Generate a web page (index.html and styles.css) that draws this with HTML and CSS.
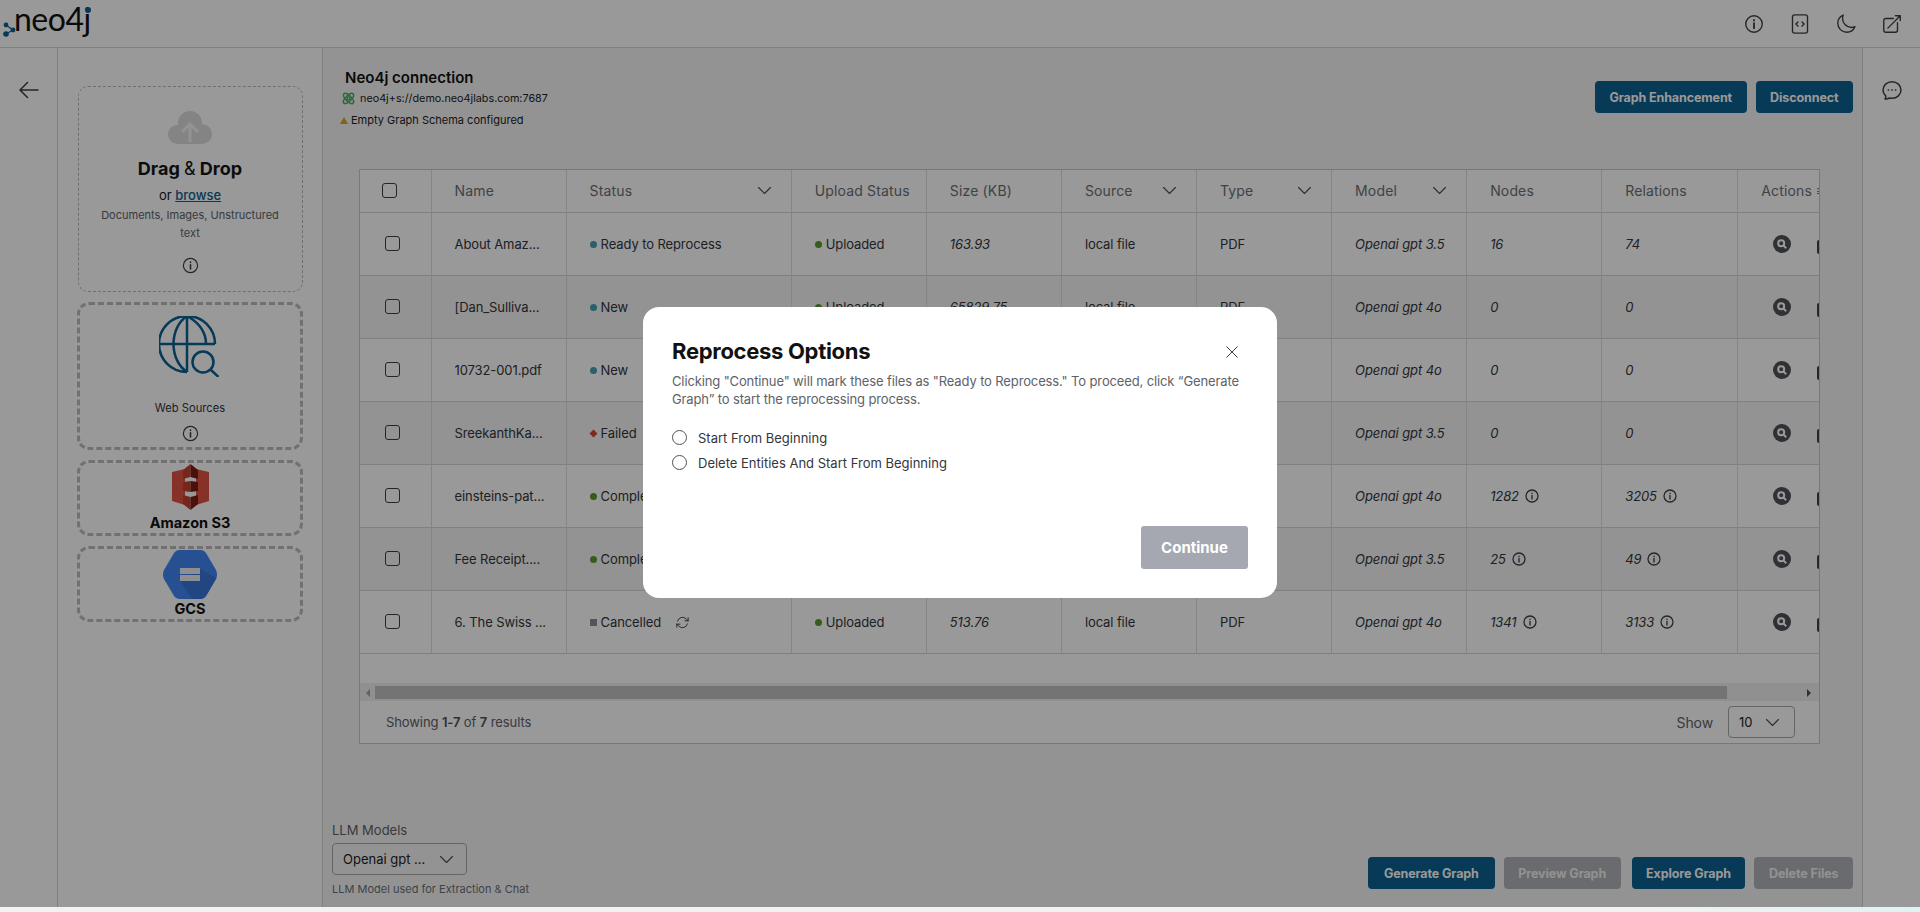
FILE: index.html
```html
<!DOCTYPE html>
<html lang="en">
<head>
  <meta charset="UTF-8">
  <title>Neo4j LLM Graph Builder</title>
  <link rel="stylesheet" href="styles.css">
</head>
<body>
  <svg class="sprites" aria-hidden="true">
    <symbol id="i-info" viewBox="0 0 24 24"><path d="M21 12a9 9 0 1 1-18 0 9 9 0 0 1 18 0Z"/><path d="M12 11v5.500M12 7.600v.6" stroke-width="2"/></symbol>
    <symbol id="i-code" viewBox="0 0 24 24"><path d="M14.250 9.750 16.500 12l-2.250 2.250m-4.500 0L7.500 12l2.250-2.250M6 22h12a2.200 2.200 0 0 0 2.200-2.200V4.200A2.200 2.200 0 0 0 18 2H6a2.200 2.200 0 0 0-2.200 2.200v15.600A2.200 2.200 0 0 0 6 22Z"/></symbol>
    <symbol id="i-moon" viewBox="0 0 24 24"><path d="M21.752 15.002A9.720 9.720 0 0 1 18 15.750c-5.385 0-9.750-4.365-9.750-9.750 0-1.330.266-2.597.748-3.752A9.753 9.753 0 0 0 3 11.250C3 16.635 7.365 21 12.750 21a9.753 9.753 0 0 0 9.002-5.998Z"/></symbol>
    <symbol id="i-ext" viewBox="0 0 24 24"><path d="M13.500 6H5.250A2.250 2.250 0 0 0 3 8.250v10.500A2.250 2.250 0 0 0 5.250 21h10.500A2.250 2.250 0 0 0 18 18.750V10.500m-10.500 6L21 3m0 0h-5.250M21 3v5.250"/></symbol>
    <symbol id="i-chat" viewBox="0 0 24 24"><path d="M8.600 12h-.4m4 0h-.4m4 0h-.4M21 12c0 4.556-4.030 8.250-9 8.250a9.764 9.764 0 0 1-2.555-.337A5.972 5.972 0 0 1 5.410 20.970a5.969 5.969 0 0 1-.474-.065 4.480 4.480 0 0 0 .978-2.025c.09-.457-.133-.901-.467-1.226C3.930 16.178 3 14.189 3 12c0-4.556 4.030-8.250 9-8.250s9 3.694 9 8.250Z"/></symbol>
    <symbol id="i-back" viewBox="0 0 24 24"><path d="M10.500 19.500 3 12m0 0 7.500-7.500M3 12h18"/></symbol>
    <symbol id="i-chev" viewBox="0 0 24 24"><path d="m19.500 8.250-7.500 7.500-7.500-7.500"/></symbol>
    <symbol id="i-close" viewBox="0 0 24 24"><path d="M4 20 20 4M4 4l16 16"/></symbol>
    <symbol id="i-refresh" viewBox="0 0 24 24"><path d="M16.023 9.348h4.992v-.001M2.985 19.644v-4.992m0 0h4.992m-4.993 0 3.181 3.183a8.250 8.250 0 0 0 13.803-3.700M4.031 9.865a8.250 8.250 0 0 1 13.803-3.700l3.181 3.182m0-4.991v4.990"/></symbol>
    <symbol id="i-search" viewBox="0 0 18 18"><circle class="sq-bg" cx="9" cy="9" r="9"/><circle class="sq-lens" cx="8.200" cy="8.200" r="3"/><path class="sq-lens" d="m10.400 10.400 2.800 2.800"/></symbol>
  </svg>

  <div class="app">
    <header class="topbar">
      <div class="logo">
        <svg class="logo-dots" width="14" height="16" viewBox="0 0 14 16">
          <path d="M3 3 10 8 3 12" fill="none" stroke="#0a6190" stroke-width="1.200"/>
          <circle cx="3" cy="3" r="2.400"/><circle cx="3" cy="12" r="2.800"/><circle cx="10" cy="8" r="2.400"/>
        </svg>
        <span class="logo-text">neo4j</span>
        <i class="logo-jdot"></i>
      </div>
      <nav class="topbar-icons">
        <svg class="icon"><use href="#i-info"/></svg>
        <svg class="icon"><use href="#i-code"/></svg>
        <svg class="icon"><use href="#i-moon"/></svg>
        <svg class="icon"><use href="#i-ext"/></svg>
      </nav>
    </header>

    <div class="content">
      <aside class="rail">
        <svg class="icon rail-icon"><use href="#i-back"/></svg>
      </aside>

      <section class="sources">
        <div class="drop-zone">
          <svg class="cloud" width="44" height="33" viewBox="0 0 44 33">
            <circle cx="22" cy="12" r="12" fill="#dcdcdc"/>
            <circle cx="9.500" cy="23.500" r="9.500" fill="#dcdcdc"/>
            <circle cx="34" cy="23" r="10" fill="#dcdcdc"/>
            <path d="M9 16H34V33H9Z" fill="#dcdcdc"/>
            <path d="M22 31V13m-8 8 8-8 8 8" fill="none" stroke="#f6f6f6" stroke-width="3"/>
          </svg>
          <div class="drop-title">Drag <span>&amp;</span> Drop</div>
          <div class="drop-or">or <a href="#">browse</a></div>
          <div class="drop-hint">Documents, Images, Unstructured text</div>
          <svg class="icon info-sm"><use href="#i-info"/></svg>
        </div>

        <div class="source-box source-web">
          <svg class="globe" width="60" height="61" viewBox="0 0 60 61">
            <path d="M56 28A28 28 0 1 0 28 56M28 0V56M0 28H56M28 0C10 12 10 44 28 56M28 0C44 9 47 20 47 28"/>
            <circle cx="44" cy="46" r="10.500"/>
            <path d="m51.500 53.500 8 7.500"/>
          </svg>
          <div class="web-label">Web Sources</div>
          <svg class="icon info-sm"><use href="#i-info"/></svg>
        </div>

        <div class="source-box source-logo">
          <svg width="37" height="46" viewBox="0 0 37 46">
            <path d="M0 8 13 5V41L0 37Z" fill="#e25444"/>
            <path d="M37 8 24 5V41L37 37Z" fill="#e25444"/>
            <path d="M11 6 18.500 0V13L11 15Z M11 18 18.500 17V28L11 27Z M11 31 18.500 33V46L11 40Z" fill="#c8402f"/>
            <path d="M18.500 0 26 6V15L18.500 13Z M18.500 17 26 18V27L18.500 28Z M18.500 33 26 31V40L18.500 46Z" fill="#7b1d13"/>
          </svg>
          <div class="source-name">Amazon S3</div>
        </div>

        <div class="source-box source-logo source-gcs">
          <svg width="56" height="49" viewBox="0 0 56 49">
            <path d="M2 20 12 3Q14 0 17 0H39Q42 0 44 3L54 20Q56 24.500 54 29L44 46Q42 49 39 49H17Q14 49 12 46L2 29Q0 24.500 2 20Z" fill="#4285f4"/>
            <path d="M38 19 54.500 28 44 46Q42 49 39 49H30L18 31Z" fill="#3a76d8"/>
            <path d="M18 18H38V24H18Z M18 25H38V31H18Z" fill="#eceff4"/>
          </svg>
          <div class="source-name">GCS</div>
        </div>
      </section>

      <main class="main">
        <div class="conn-row">
          <div class="conn">
            <h2 class="conn-title">Neo4j connection</h2>
            <div class="conn-line">
              <svg class="atom" width="13" height="13" viewBox="0 0 13 13">
                <ellipse cx="6.500" cy="6.500" rx="6.500" ry="2.800" transform="rotate(45 6.500 6.500)"/>
                <ellipse cx="6.500" cy="6.500" rx="6.500" ry="2.800" transform="rotate(-45 6.500 6.500)"/>
                <circle cx="6.500" cy="6.500" r="1.500"/>
              </svg>
              neo4j+s://demo.neo4jlabs.com:7687
            </div>
            <div class="conn-line conn-warn"><i class="warn-tri"></i>Empty Graph Schema configured</div>
          </div>
          <div class="conn-actions">
            <button class="btn">Graph Enhancement</button>
            <button class="btn">Disconnect</button>
          </div>
        </div>

        <div class="table-card">
          <div class="table-scroll">
            <table class="files">
              <colgroup>
                <col class="c-check"><col class="c-std"><col class="c-status"><col class="c-std"><col class="c-std"><col class="c-std">
                <col class="c-std"><col class="c-std"><col class="c-std"><col class="c-rel"><col class="c-act">
              </colgroup>
              <thead>
                <tr>
                  <th><input class="check check-head" type="checkbox"></th>
                  <th>Name</th>
                  <th><div class="th-flex">Status<svg class="icon chev"><use href="#i-chev"/></svg></div></th>
                  <th>Upload Status</th>
                  <th>Size (KB)</th>
                  <th><div class="th-flex">Source<svg class="icon chev"><use href="#i-chev"/></svg></div></th>
                  <th><div class="th-flex">Type<svg class="icon chev"><use href="#i-chev"/></svg></div></th>
                  <th><div class="th-flex">Model<svg class="icon chev"><use href="#i-chev"/></svg></div></th>
                  <th>Nodes</th>
                  <th>Relations</th>
                  <th>Actions <span class="menu-glyph">≡</span></th>
                </tr>
              </thead>
              <tbody>
                <tr>
                  <td><input class="check" type="checkbox"></td>
                  <td>About Amaz...</td>
                  <td><i class="dot teal"></i>Ready to Reprocess</td>
                  <td><i class="dot green"></i>Uploaded</td>
                  <td class="it">163.93</td><td>local file</td><td>PDF</td>
                  <td class="it">Openai gpt 3.5</td><td class="it">16</td><td class="it">74</td>
                  <td><div class="acts"><svg class="search"><use href="#i-search"/></svg><i class="act-clip"></i></div></td>
                </tr>
                <tr>
                  <td><input class="check" type="checkbox"></td>
                  <td>[Dan_Sulliva...</td>
                  <td><i class="dot teal"></i>New</td>
                  <td><i class="dot green"></i>Uploaded</td>
                  <td class="it">65829.75</td><td>local file</td><td>PDF</td>
                  <td class="it">Openai gpt 4o</td><td class="it">0</td><td class="it">0</td>
                  <td><div class="acts"><svg class="search off"><use href="#i-search"/></svg><i class="act-clip"></i></div></td>
                </tr>
                <tr>
                  <td><input class="check" type="checkbox"></td>
                  <td>10732-001.pdf</td>
                  <td><i class="dot teal"></i>New</td>
                  <td></td><td></td><td></td><td></td>
                  <td class="it">Openai gpt 4o</td><td class="it">0</td><td class="it">0</td>
                  <td><div class="acts"><svg class="search off"><use href="#i-search"/></svg><i class="act-clip"></i></div></td>
                </tr>
                <tr>
                  <td><input class="check" type="checkbox"></td>
                  <td>SreekanthKa...</td>
                  <td><i class="dot red"></i>Failed</td>
                  <td></td><td></td><td></td><td></td>
                  <td class="it">Openai gpt 3.5</td><td class="it">0</td><td class="it">0</td>
                  <td><div class="acts"><svg class="search"><use href="#i-search"/></svg><i class="act-clip"></i></div></td>
                </tr>
                <tr>
                  <td><input class="check" type="checkbox"></td>
                  <td>einsteins-pat...</td>
                  <td><i class="dot green"></i>Completed</td>
                  <td></td><td></td><td></td><td></td>
                  <td class="it">Openai gpt 4o</td>
                  <td class="it">1282<svg class="icon info-xs"><use href="#i-info"/></svg></td>
                  <td class="it">3205<svg class="icon info-xs"><use href="#i-info"/></svg></td>
                  <td><div class="acts"><svg class="search"><use href="#i-search"/></svg><i class="act-clip"></i></div></td>
                </tr>
                <tr>
                  <td><input class="check" type="checkbox"></td>
                  <td>Fee Receipt....</td>
                  <td><i class="dot green"></i>Completed</td>
                  <td></td><td></td><td></td><td></td>
                  <td class="it">Openai gpt 3.5</td>
                  <td class="it">25<svg class="icon info-xs"><use href="#i-info"/></svg></td>
                  <td class="it">49<svg class="icon info-xs"><use href="#i-info"/></svg></td>
                  <td><div class="acts"><svg class="search"><use href="#i-search"/></svg><i class="act-clip"></i></div></td>
                </tr>
                <tr>
                  <td><input class="check" type="checkbox"></td>
                  <td>6. The Swiss ...</td>
                  <td><i class="dot gray"></i>Cancelled<svg class="icon refresh"><use href="#i-refresh"/></svg></td>
                  <td><i class="dot green"></i>Uploaded</td>
                  <td class="it">513.76</td><td>local file</td><td>PDF</td>
                  <td class="it">Openai gpt 4o</td>
                  <td class="it">1341<svg class="icon info-xs"><use href="#i-info"/></svg></td>
                  <td class="it">3133<svg class="icon info-xs"><use href="#i-info"/></svg></td>
                  <td><div class="acts"><svg class="search"><use href="#i-search"/></svg><i class="act-clip"></i></div></td>
                </tr>
              </tbody>
            </table>
          </div>

          <div class="hscroll">
            <i class="arrow arrow-l"></i>
            <div class="hscroll-thumb"></div>
            <i class="arrow arrow-r"></i>
          </div>

          <div class="table-foot">
            <span>Showing <b>1-7</b> of <b>7</b> results</span>
            <div class="page-size">
              <span>Show</span>
              <div class="select select-sm">10<svg class="icon chev"><use href="#i-chev"/></svg></div>
            </div>
          </div>
        </div>

        <div class="toolbar">
          <div class="llm">
            <label class="llm-label">LLM Models</label>
            <div class="select select-llm">Openai gpt ...<svg class="icon chev"><use href="#i-chev"/></svg></div>
            <div class="llm-help">LLM Model used for Extraction &amp; Chat</div>
          </div>
          <div class="toolbar-btns">
            <button class="btn btn-generate">Generate Graph</button>
            <button class="btn btn-off">Preview Graph</button>
            <button class="btn btn-explore">Explore Graph</button>
            <button class="btn btn-off">Delete Files</button>
          </div>
        </div>
      </main>

      <aside class="rail rail-right">
        <svg class="icon rail-icon"><use href="#i-chat"/></svg>
      </aside>
    </div>
  </div>

  <div class="backdrop">
    <div class="modal">
      <div class="modal-head">
        <h1>Reprocess Options</h1>
        <svg class="icon modal-close"><use href="#i-close"/></svg>
      </div>
      <p class="modal-text">Clicking "Continue" will mark these files as "Ready to Reprocess." To proceed, click “Generate Graph” to start the reprocessing process.</p>
      <label class="radio-row"><input type="radio" name="reprocess">Start From Beginning</label>
      <label class="radio-row"><input type="radio" name="reprocess">Delete Entities And Start From Beginning</label>
      <div class="modal-foot">
        <button class="btn-continue">Continue</button>
      </div>
    </div>
  </div>
</body>
</html>
```

FILE: styles.css
```css
* {
  box-sizing: border-box;
}

body {
  margin: 0;
  height: 912px;
  overflow: hidden;
  background: linear-gradient(90deg, #f2f2f2 0%, #f2f2f2 85%, #dff3f3 100%);
  font-family: Inter, "Liberation Sans", sans-serif;
  color: #4d5157;
}

.sprites {
  display: none;
}

.icon {
  width: 24px;
  height: 24px;
  fill: none;
  stroke: #3c3f44;
  stroke-width: 1.5;
  stroke-linecap: round;
  stroke-linejoin: round;
}

.app {
  height: 907px;
  display: flex;
  flex-direction: column;
  background: #fff;
}

/* top bar */
.topbar {
  height: 48px;
  flex: none;
  display: flex;
  justify-content: space-between;
  align-items: center;
  border-bottom: 1px solid #d6d6d6;
}

.logo {
  position: relative;
  width: 94px;
  height: 47px;
  display: flex;
  align-items: flex-start;
  padding: 2px 0 0 3px;
}

.logo-dots {
  flex: none;
  margin-top: 20px;
}

.logo-dots circle {
  fill: #0a6190;
}

.logo-text {
  margin-left: -3px;
  font-family: Lato, sans-serif;
  font-size: 32px;
  line-height: 34px;
  letter-spacing: -0.5px;
  color: #111;
}

.logo-jdot {
  position: absolute;
  left: 85px;
  top: 7px;
  width: 6px;
  height: 6px;
  border-radius: 50%;
  background: #0a6190;
}

.topbar-icons {
  display: flex;
  align-items: center;
  gap: 24px;
  padding-right: 17px;
}

.topbar-icons .icon {
  width: 22px;
  height: 22px;
  display: block;
}

/* layout columns */
.content {
  flex: 1;
  min-height: 0;
  display: flex;
}

.rail {
  width: 58px;
  flex: none;
  display: flex;
  justify-content: center;
  padding-top: 30px;
  border-right: 1px solid #d6d6d6;
}

.rail-right {
  border-right: 0;
  border-left: 1px solid #d6d6d6;
}

.rail-icon {
  display: block;
}

.sources {
  width: 265px;
  flex: none;
  display: flex;
  flex-direction: column;
  align-items: center;
  gap: 10px;
  padding-top: 38px;
  border-right: 1px solid #d6d6d6;
}

.drop-zone {
  width: 225px;
  height: 206px;
  display: flex;
  flex-direction: column;
  align-items: center;
  padding: 24px 16px 0;
  border: 1px dashed #b9b9b9;
  border-radius: 10px;
  text-align: center;
}

.cloud {
  flex: none;
}

.drop-title {
  margin-top: 12px;
  font-size: 18px;
  line-height: 26px;
  font-weight: 700;
  color: #151515;
}

.drop-title span {
  font-weight: 400;
}

.drop-or {
  margin-top: 3px;
  font-size: 13px;
  line-height: 20px;
  color: #151515;
}

.drop-or a {
  color: #0a6190;
  font-weight: 500;
}

.drop-hint {
  margin-top: 1px;
  font-size: 11px;
  line-height: 18px;
  color: #5e6268;
}

.info-sm {
  width: 19px;
  height: 19px;
  flex: none;
  margin-top: 14px;
}

.source-box {
  width: 226px;
  display: flex;
  flex-direction: column;
  align-items: center;
  border: 3px dashed #bdbdbd;
  border-radius: 12px;
}

.source-web {
  height: 148px;
  padding-top: 11px;
}

.globe {
  flex: none;
  margin-right: 2px;
  fill: none;
  stroke: #0a6190;
  stroke-width: 2.500;
}

.web-label {
  margin-top: 23px;
  font-size: 11.200px;
  line-height: 16px;
  color: #33363b;
}

.source-web .info-sm {
  margin-top: 8px;
}

.source-logo {
  height: 76px;
  padding-top: 1px;
}

.source-logo svg {
  flex: none;
}

.source-name {
  margin-top: 3px;
  font-size: 14.500px;
  line-height: 20px;
  font-weight: 700;
  color: #111;
}

.source-gcs .source-name {
  margin-top: 0;
}

/* main column */
.main {
  flex: 1;
  min-width: 0;
  display: flex;
  flex-direction: column;
  padding: 0 9px;
  background: #f6f6f6;
}

.conn-row {
  height: 121px;
  flex: none;
  display: flex;
  justify-content: space-between;
  padding-top: 33px;
}

.conn {
  padding-left: 10px;
}

.conn-title {
  margin: -13px 0 0 3px;
  font-size: 15px;
  line-height: 20px;
  font-weight: 600;
  color: #111;
}

.conn-line {
  display: flex;
  align-items: center;
  gap: 5px;
  margin-top: 2px;
  height: 16px;
  font-size: 10.800px;
  color: #222;
}

.conn-warn {
  margin-top: 6px;
  gap: 3px;
  margin-left: -2px;
  font-size: 11px;
}

.atom {
  flex: none;
  fill: none;
  stroke: #4fae6a;
  stroke-width: 1.600;
}

.warn-tri {
  width: 0;
  height: 0;
  border-left: 4px solid transparent;
  border-right: 4px solid transparent;
  border-bottom: 7px solid #d4a91a;
}

.conn-actions {
  display: flex;
  gap: 9px;
}

.btn {
  height: 32px;
  padding: 0 14.500px;
  border: 0;
  border-radius: 4px;
  background: #0a6190;
  color: #fff;
  font-family: inherit;
  font-size: 12.500px;
  font-weight: 700;
  letter-spacing: -0.1px;
}

.btn-off {
  background: #b1b3b8;
  color: #f3f3f3;
}

/* table */
.table-card {
  width: 1461px;
  height: 575px;
  flex: none;
  margin-left: 27px;
  display: flex;
  flex-direction: column;
  background: #fff;
  border: 1px solid #c9c9c9;
}

.table-scroll {
  height: 514px;
  flex: none;
  overflow: hidden;
  border-bottom: 1px solid #f1f1f1;
}

.files {
  width: 1578px;
  table-layout: fixed;
  border-collapse: collapse;
  font-size: 13px;
  letter-spacing: -0.1px;
  color: #33363b;
}

.c-check { width: 71px; }
.c-std { width: 135px; }
.c-status { width: 225px; }
.c-rel { width: 136px; }
.c-act { width: 200px; }

.files th,
.files td {
  padding: 0 0 0 23px;
  border-right: 1px solid #dedede;
  border-bottom: 1px solid #d6d6d6;
  text-align: left;
  white-space: nowrap;
  overflow: hidden;
}

.files th {
  height: 42px;
  font-size: 14px;
  letter-spacing: 0.15px;
  font-weight: 400;
  color: #6b6f75;
}

.files td {
  height: 63px;
}

.files tbody tr:nth-child(even) td {
  background: #f5f5f5;
}

.files th:last-child,
.files td:last-child {
  border-right: 0;
  overflow: visible;
}

.files th:first-child {
  padding-left: 22px;
}

.files td:first-child {
  padding-left: 25px;
}

.th-flex {
  display: flex;
  align-items: center;
  justify-content: space-between;
  padding-right: 17px;
}

.chev {
  width: 19px;
  height: 19px;
  flex: none;
  display: block;
  stroke: #4d5157;
}

.menu-glyph {
  font-size: 14px;
}

.it {
  font-style: italic;
}

.check {
  appearance: none;
  display: block;
  width: 15px;
  height: 15px;
  margin: 0;
  border: 1.500px solid #3c3f44;
  border-radius: 3px;
  background: transparent;
}

.dot {
  display: inline-block;
  width: 7px;
  height: 7px;
  margin-right: 4px;
  border-radius: 50%;
  vertical-align: 1px;
}

.dot.teal { background: #4a9fb3; }
.dot.green { background: #5a9a2d; }
.dot.red { background: #d8442c; border-radius: 0; transform: rotate(45deg) scale(0.8); }
.dot.gray { background: #8e8e8e; border-radius: 0; }

.info-xs {
  width: 16px;
  height: 16px;
  margin-left: 5px;
  vertical-align: -3px;
  stroke-width: 1.900;
}

.refresh {
  width: 15px;
  height: 15px;
  margin-left: 14px;
  vertical-align: -3px;
}

.acts {
  display: flex;
  align-items: center;
  padding-left: 12px;
}

.search {
  width: 18px;
  height: 18px;
  flex: none;
}

.sq-bg {
  fill: #4f5257;
}

.search.off .sq-bg {
  fill: #a9abae;
}

.sq-lens {
  fill: none;
  stroke: #fff;
  stroke-width: 2;
}

.act-clip {
  width: 12px;
  height: 14px;
  flex: none;
  margin: 6px 0 0 26px;
  border-radius: 2px;
  background: #3f4246;
}

.hscroll {
  height: 17px;
  flex: none;
  display: flex;
  align-items: center;
  background: #f1f1f1;
}

.hscroll-thumb {
  width: 1352px;
  height: 13px;
  margin-left: 5px;
  background: #c1c1c1;
}

.arrow {
  width: 0;
  height: 0;
  border-top: 4px solid transparent;
  border-bottom: 4px solid transparent;
}

.arrow-l {
  margin-left: 6px;
  border-right: 4px solid #a3a3a3;
}

.arrow-r {
  margin-left: 80px;
  border-left: 4px solid #505050;
}

.table-foot {
  flex: 1;
  display: flex;
  align-items: center;
  justify-content: space-between;
  padding: 0 24px 0 26px;
  font-size: 13px;
  letter-spacing: -0.1px;
  color: #5e6268;
}

.table-foot b {
  font-weight: 600;
  color: #4d5157;
}

.page-size {
  display: flex;
  align-items: center;
  gap: 15px;
  font-size: 14px;
}

.select {
  display: flex;
  align-items: center;
  justify-content: space-between;
  height: 32px;
  border: 1px solid #a8a8a8;
  border-radius: 4px;
  color: #222;
  font-size: 13px;
}

.select-sm {
  width: 67px;
  padding: 0 12px 0 10px;
}

/* bottom toolbar */
.toolbar {
  margin-top: auto;
  height: 87px;
  flex: none;
  display: flex;
  justify-content: space-between;
  align-items: flex-start;
}

.llm-label {
  display: block;
  height: 20px;
  margin-bottom: 3px;
  font-size: 13px;
  line-height: 20px;
  color: #5e6268;
}

.select-llm {
  width: 135px;
  padding: 0 10px 0 10px;
}

.llm-help {
  margin-top: 6px;
  font-size: 11px;
  line-height: 16px;
  color: #6b6f75;
}

.toolbar-btns {
  display: flex;
  gap: 9px;
  margin-top: 37px;
}

.btn-generate {
  padding: 0 16px;
}

.btn-explore {
  margin-left: 2px;
}

/* modal */
.backdrop {
  position: absolute;
  left: 0;
  top: 0;
  width: 1920px;
  height: 907px;
  display: flex;
  align-items: center;
  justify-content: center;
  padding-bottom: 2px;
  background: rgba(0, 0, 0, 0.4);
}

.modal {
  width: 634px;
  height: 291px;
  display: flex;
  flex-direction: column;
  padding: 29px;
  border-radius: 16px;
  background: #fff;
}

.modal-head {
  display: flex;
  justify-content: space-between;
  align-items: center;
  height: 30px;
}

.modal-head h1 {
  margin: 0;
  font-size: 22px;
  line-height: 30px;
  font-weight: 700;
  letter-spacing: -0.3px;
  color: #111;
}

.modal-close {
  width: 16px;
  height: 16px;
  margin: 2px 8px 0 0;
}

.modal-text {
  margin: 6px 0 0;
  font-size: 13px;
  letter-spacing: -0.13px;
  line-height: 18px;
  color: #5e6268;
}

.radio-row {
  display: flex;
  align-items: center;
  gap: 11px;
  height: 25px;
  font-size: 13px;
  color: #33363b;
}

.modal-text + .radio-row {
  margin-top: 17px;
}

.radio-row input {
  appearance: none;
  width: 15px;
  height: 15px;
  margin: 0;
  border: 1px solid #4d5157;
  border-radius: 50%;
}

.modal-foot {
  margin-top: auto;
  display: flex;
  justify-content: flex-end;
}

.btn-continue {
  width: 107px;
  height: 43px;
  border: 0;
  border-radius: 3px;
  background: #a5a8b1;
  color: #fff;
  font-family: inherit;
  font-size: 15px;
  font-weight: 700;
}
```
